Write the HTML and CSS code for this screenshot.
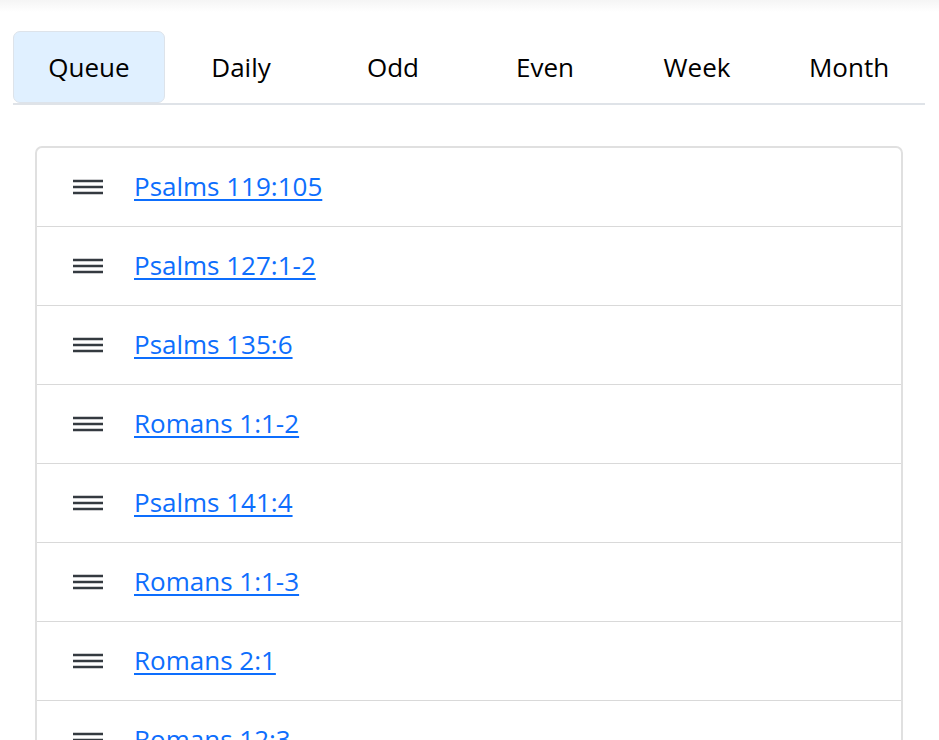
FILE: index.html
```html
<!DOCTYPE html>
<html lang="en">
<head>
<meta charset="utf-8">
<title>Queue</title>
<link rel="stylesheet" href="styles.css">
</head>
<body>
<div class="shade"></div>
<main class="page">
  <nav class="tabs">
    <a class="tab active" href="#">Queue</a>
    <a class="tab" href="#">Daily</a>
    <a class="tab" href="#">Odd</a>
    <a class="tab" href="#">Even</a>
    <a class="tab" href="#">Week</a>
    <a class="tab" href="#">Month</a>
  </nav>
  <ul class="list">
    <li class="item"><svg class="grip" viewBox="0 0 30 16"><path d="M0 2h30M0 8h30M0 14h30"/></svg><a href="#">Psalms 119:105</a></li>
    <li class="item"><svg class="grip" viewBox="0 0 30 16"><path d="M0 2h30M0 8h30M0 14h30"/></svg><a href="#">Psalms 127:1-2</a></li>
    <li class="item"><svg class="grip" viewBox="0 0 30 16"><path d="M0 2h30M0 8h30M0 14h30"/></svg><a href="#">Psalms 135:6</a></li>
    <li class="item"><svg class="grip" viewBox="0 0 30 16"><path d="M0 2h30M0 8h30M0 14h30"/></svg><a href="#">Romans 1:1-2</a></li>
    <li class="item"><svg class="grip" viewBox="0 0 30 16"><path d="M0 2h30M0 8h30M0 14h30"/></svg><a href="#">Psalms 141:4</a></li>
    <li class="item"><svg class="grip" viewBox="0 0 30 16"><path d="M0 2h30M0 8h30M0 14h30"/></svg><a href="#">Romans 1:1-3</a></li>
    <li class="item"><svg class="grip" viewBox="0 0 30 16"><path d="M0 2h30M0 8h30M0 14h30"/></svg><a href="#">Romans 2:1</a></li>
    <li class="item"><svg class="grip" viewBox="0 0 30 16"><path d="M0 2h30M0 8h30M0 14h30"/></svg><a href="#">Romans 12:3</a></li>
  </ul>
</main>
</body>
</html>
```
FILE: styles.css
```css
html, body {
  margin: 0;
  padding: 0;
  background: #fff;
  height: 100%;
  overflow: hidden;
}
body {
  font-family: "Open Sans", "Noto Sans", sans-serif;
  font-size: 26px;
  line-height: 39px;
  color: #000;
}
.shade {
  height: 12px;
  background: linear-gradient(#f5f5f5, #fff);
}
.page {
  padding: 19px 14px 0 13px;
}
.tabs {
  display: flex;
  border-bottom: 2px solid #dfe3e8;
}
.tab {
  flex: 1;
  text-align: center;
  padding: 16px 0 15px;
  border: 1px solid transparent;
  border-radius: 7px;
  color: #000;
  text-decoration: none;
}
.tab.active {
  background: #e0f0ff;
  border-color: #dde3ea;
}
.list {
  list-style: none;
  margin: 41px 22px 0;
  padding: 0;
  border: 2px solid #e0e0e0;
  border-radius: 7px;
}
.item {
  display: flex;
  align-items: center;
  gap: 31px;
  padding: 19px 36px 20px;
  border-top: 1px solid #d9d9d9;
}
.item:first-child {
  border-top: none;
}
.grip {
  width: 30px;
  height: 16px;
  fill: none;
  stroke: #343a40;
  stroke-width: 2.4;
  flex: none;
}
.item a {
  color: #0d6efd;
  text-decoration: underline;
  text-underline-offset: 3px;
  text-decoration-thickness: 2px;
}
```
